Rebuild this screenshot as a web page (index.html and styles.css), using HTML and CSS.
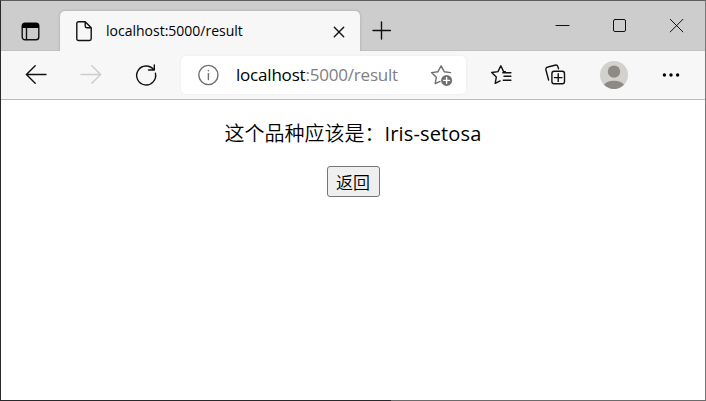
FILE: index.html
```html
<!DOCTYPE html>
<html lang="zh">
<head>
<meta charset="utf-8">
<title>localhost:5000/result</title>
<link rel="stylesheet" href="styles.css">
</head>
<body>
<div class="window">
  <header class="tabbar">
    <svg class="icon tab-actions" viewBox="0 0 24 24"><rect x="3.2" y="3.2" width="16.6" height="16.6" rx="2.8"/><path d="M7.5 7v12.5"/><path class="solid" d="M3 8V5.6Q3 3 5.6 3h11.8Q20 3 20 5.6V8z"/></svg>
    <div class="tab">
      <svg class="icon file" viewBox="0 0 24 24"><path d="M6.5 2.7h6.7l6 6v11.1a1.7 1.7 0 0 1-1.7 1.7h-11a1.7 1.7 0 0 1-1.7-1.7V4.4a1.7 1.7 0 0 1 1.7-1.7zM13.2 2.9v4.2a1.6 1.6 0 0 0 1.6 1.6h4.3"/></svg>
      <span class="tab-title">localhost:5000/result</span>
      <svg class="icon tab-close" viewBox="0 0 24 24"><path d="M7.3 7.3l9.4 9.4M16.7 7.3l-9.4 9.4"/></svg>
    </div>
    <svg class="icon new-tab" viewBox="0 0 24 24"><path d="M3 12.5h17.4M11.5 4v17"/></svg>
    <div class="controls">
      <svg class="icon thin" viewBox="0 0 24 24"><path d="M5 11.5h13"/></svg>
      <svg class="icon thin" viewBox="0 0 24 24"><rect x="5.5" y="5.5" width="12" height="12" rx="1.5"/></svg>
      <svg class="icon thin" viewBox="0 0 24 24"><path d="M5.3 5.3l12.6 12.6M17.9 5.3L5.3 17.9"/></svg>
    </div>
  </header>
  <nav class="toolbar">
    <svg class="icon" viewBox="0 0 24 24"><path d="M22 11.5H2.3M11.2 2.8l-8.8 8.7 8.8 8.7"/></svg>
    <svg class="icon disabled" viewBox="0 0 24 24"><path d="M2 11.5h19.7M12.8 2.8l8.8 8.7-8.8 8.7"/></svg>
    <svg class="icon" viewBox="0 0 24 24"><path d="M21.4 10.2A9.5 9.5 0 1 1 19.8 6.8M20.3 2v5h-5.8"/></svg>
    <div class="address">
      <svg class="icon info" viewBox="0 0 24 24"><circle cx="12.4" cy="12" r="9.6"/><path d="M12.4 10.6v6"/><circle class="solid" cx="12.4" cy="7.6" r=".8"/></svg>
      <span class="url">localhost<span class="path">:5000/result</span></span>
      <svg class="icon info" viewBox="0 0 24 24"><path d="M21.5 9.6l-6.3-.9-3.1-5.9-3.1 5.9-6.5.9 4.8 4.7-1.1 6.4 4.9-2.3"/><circle class="plus-disc" cx="17.6" cy="17.4" r="5.5"/><path class="plus" d="M14.7 17.4h5.8M17.6 14.5v5.8"/></svg>
    </div>
    <svg class="icon favorites" viewBox="0 0 24 24"><path d="M16.3 8.8l-1.7-.2-2.8-5.8L9 8.6l-6.3.9 4.6 4.6-1.1 6.3 4.9-2.5M13.8 9.7h8.1M15 13.3h6.9M14.3 17.3h7.6"/></svg>
    <svg class="icon collections" viewBox="0 0 24 24"><rect x="7.9" y="8.2" width="12.6" height="12.6" rx="2.2"/><path d="M14.2 10.8v7.6M10.4 14.6H18M4.6 17L2 7.2Q1.3 4.6 3.9 4l7-1.8q2.4-.6 3.1 1.8l.5 1.8"/></svg>
    <svg class="avatar" viewBox="0 0 28 28"><circle class="avatar-bg" cx="14" cy="14" r="14"/><circle cx="14" cy="10.6" r="6.2"/><path d="M4 23.8a11 7 0 0 1 20 0A14 14 0 0 1 4 23.8z"/></svg>
    <svg class="icon more" viewBox="0 0 24 24"><circle class="solid" cx="5.4" cy="12" r="1.7"/><circle class="solid" cx="12" cy="12" r="1.7"/><circle class="solid" cx="18.6" cy="12" r="1.7"/></svg>
  </nav>
  <main class="page">
    <p class="result">这个品种应该是：<span class="species">Iris-setosa</span></p>
    <button class="back" type="button">返回</button>
  </main>
</div>
</body>
</html>
```

FILE: styles.css
```css
* { box-sizing: border-box; }
body {
  margin: 0;
  background: linear-gradient(90deg, #29292b 391px, #6b6b6b 391px);
  font-family: "Open Sans", "Noto Sans", "Noto Sans CJK SC", sans-serif;
  color: #000;
}
.window {
  width: 706px;
  height: 401px;
  border: 1px solid #29292b;
  border-top-color: #5e5c5e;
  border-right-color: #777;
  border-bottom-color: transparent;
  background: #fff;
  background-clip: padding-box;
  display: flex;
  flex-direction: column;
}
.tabbar {
  height: 50px;
  flex: none;
  display: flex;
  align-items: flex-start;
  background: #cdcdcd;
  box-shadow: inset 0 -1px #c0c0c0;
}
.icon {
  width: 24px;
  height: 24px;
  flex: none;
  fill: none;
  stroke: #111;
  stroke-width: 1.4;
  stroke-linecap: round;
  stroke-linejoin: round;
}
.icon .solid { fill: currentColor; stroke: none; }
.tab-actions { margin: 19px 16px 0 18px; }
.tab {
  width: 300px;
  height: 40px;
  margin: 10px 0 0 1px;
  padding: 0 9px 0 12px;
  display: flex;
  align-items: center;
  background: #f7f7f7;
  border-radius: 5px 5px 0 0;
  box-shadow: 0 0 3px rgba(0, 0, 0, .2);
  clip-path: inset(-4px -4px 0 -4px);
}
.tab-close { margin-top: 2px; }
.tab-title {
  font-family: "Open Sans", sans-serif;
  font-size: 14px;
  letter-spacing: 0;
  line-height: 20px;
  margin-left: 10px;
  flex: 1;
  white-space: nowrap;
}
.new-tab { margin: 17px 0 0 10px; }
.controls {
  display: flex;
  gap: 33px;
  margin: 13px 16px 0 auto;
}
.thin { stroke-width: 1; }
.toolbar {
  height: 49px;
  flex: none;
  display: flex;
  align-items: center;
  gap: 31px;
  padding-left: 23px;
  background: #f7f7f7;
  border-bottom: 1px solid #bababa;
}
.disabled { stroke: #ccc; }
.address {
  width: 285px;
  height: 38px;
  margin-left: -8px;
  padding: 0 13px 0 15px;
  display: flex;
  align-items: center;
  background: #fff;
  border-radius: 5px;
  box-shadow: 0 0 3px rgba(0, 0, 0, .06);
}
.info { stroke: #707070; color: #707070; }
.plus-disc { fill: #707070; stroke: none; }
.plus { stroke: #fff; }
.url {
  font-family: "Open Sans", sans-serif;
  font-size: 17px;
  font-weight: 400;
  letter-spacing: -.2px;
  line-height: 24px;
  margin-left: 16px;
  flex: 1;
  white-space: nowrap;
}
.path { color: #808080; }
.favorites { margin-left: -8px; }
.avatar {
  width: 28px;
  height: 28px;
  margin-left: 1px;
  flex: none;
  fill: #8d8985;
}
.avatar-bg { fill: #d3d1cd; }
.more { margin-left: 0; }
.page {
  flex: 1;
  display: flex;
  flex-direction: column;
  align-items: center;
}
.result {
  margin: 19px 0 0;
  font-family: "Noto Sans CJK SC", sans-serif;
  font-size: 20px;
  line-height: 28px;
  font-weight: 350;
}
.species {
  font-family: "Open Sans", sans-serif;
  font-weight: 400;
  letter-spacing: .15px;
}
.back {
  width: 53px;
  height: 31px;
  margin: 18px 0 0;
  padding: 0;
  border: 1px solid #767676;
  border-radius: 3px;
  background: #efefef;
  color: #000;
  font: 350 17px/27px "Noto Sans CJK SC", sans-serif;
}
```
